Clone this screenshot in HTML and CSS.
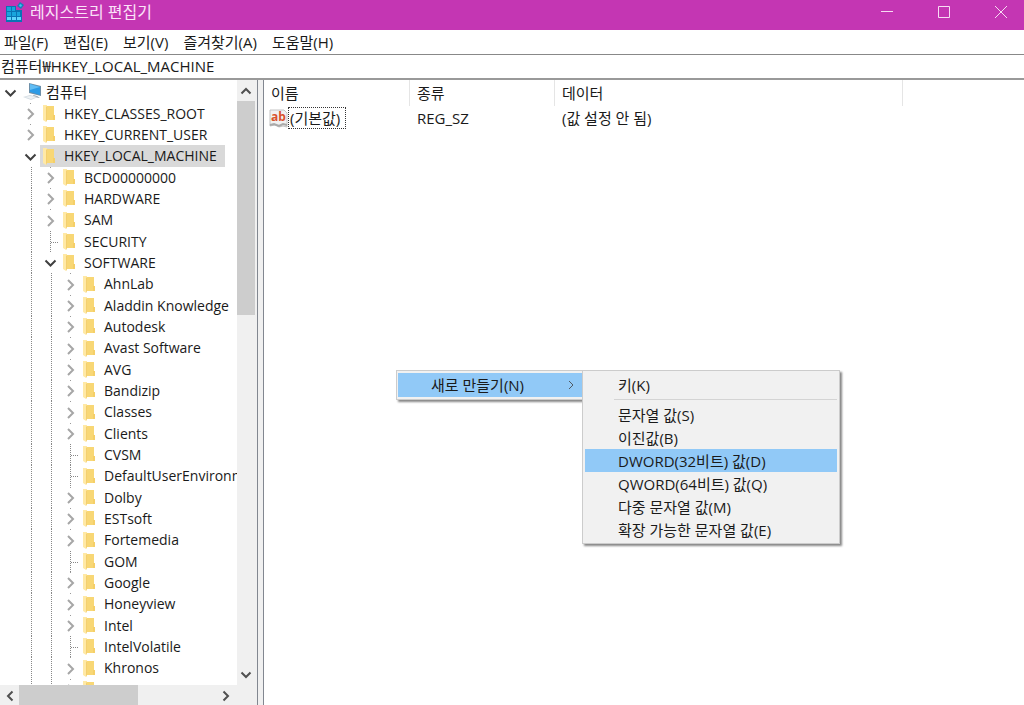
FILE: index.html
```html
<!DOCTYPE html>
<html lang="ko">
<head>
<meta charset="utf-8">
<title>레지스트리 편집기</title>
<link rel="stylesheet" href="styles.css">
</head>
<body>
<svg class="symbols" aria-hidden="true">
  <symbol id="closed" viewBox="0 0 20 21"><path d="M8 6 L13 11 L8 16" fill="none" stroke="#a6a6a6" stroke-width="2"/></symbol>
  <symbol id="open" viewBox="0 0 20 21"><path d="M5.5 8.5 L10.5 13.5 L15.5 8.5" fill="none" stroke="#404040" stroke-width="2"/></symbol>
  <symbol id="folder" viewBox="0 0 12 17"><path d="M3 1h8v11h1v3H3z" fill="#f8d775"/><path d="M10 10h2v5h-2z" fill="#f5cf68"/><path d="M0 0h4v15l-1 2-3-2z" fill="#ffe9a6"/><path d="M3 2l1-1v14l-1 2z" fill="#f3cf70"/></symbol>
</svg>
<div class="window">
  <header class="titlebar">
    <svg class="app-icon" viewBox="0 0 20 20" aria-hidden="true">
      <path d="M2 4h10v4h6v12H2z" fill="#0a74b4"/>
      <path d="M3 5h4v4H3zM8 5h3v4H8zM3 10h4v4H3zM8 10h4v4H8zM13 10h3v4h-3z" fill="#19a5dc"/>
      <path d="M3 15h4v3H3zM8 15h4v3H8zM13 15h4v3h-4z" fill="#5fd4fb"/>
      <path d="M16 0l4 3-3 4-4-3z" fill="#1480bb"/><path d="M16 2l2 1-1 2-2-1z" fill="#41c3f2"/>
    </svg>
    <h1>레지스트리 편집기</h1>
    <div class="window-buttons">
      <button aria-label="최소화"><svg viewBox="0 0 12 12"><path d="M0 5.5h12"/></svg></button>
      <button aria-label="최대화"><svg viewBox="0 0 12 12"><path d="M.5.5h11v11H.5z"/></svg></button>
      <button aria-label="닫기"><svg viewBox="0 0 12 12"><path d="M0 0l12 12M12 0L0 12"/></svg></button>
    </div>
  </header>
  <nav class="menubar">
    <button>파일(F)</button><button>편집(E)</button><button>보기(V)</button><button>즐겨찾기(A)</button><button>도움말(H)</button>
  </nav>
  <input class="address" aria-label="주소" value="컴퓨터₩HKEY_LOCAL_MACHINE">
  <main class="panes">
    <section class="tree-pane">
      <ul class="tree">
        <li><button class="twist"><svg><use href="#open"/></svg></button><svg class="computer" viewBox="0 0 20 18"><path d="M6 0l12 3v10L6 10z" fill="#6d8fa8"/><path d="M7 1l10 3v8L7 9z" fill="#2c9be6"/><path d="M7 1l10 3-10 3z" fill="#62bdf3"/><path d="M10 12l4 1 3 2-6-1z" fill="#8d98a0"/><path d="M0 14l7-2 8 2-7 3z" fill="#d4dce2"/><path d="M2 14l5-1 6 1-5 2z" fill="#eef2f5"/></svg><span>컴퓨터</span></li>
        <li><i></i><button class="twist dots"><svg><use href="#closed"/></svg></button><svg class="folder"><use href="#folder"/></svg><span>HKEY_CLASSES_ROOT</span></li>
        <li><i></i><button class="twist dots"><svg><use href="#closed"/></svg></button><svg class="folder"><use href="#folder"/></svg><span>HKEY_CURRENT_USER</span></li>
        <li><i></i><button class="twist"><svg><use href="#open"/></svg></button><div class="selected"><svg class="folder"><use href="#folder"/></svg><span>HKEY_LOCAL_MACHINE</span></div></li>
        <li><i></i><i class="line"></i><button class="twist dots"><svg><use href="#closed"/></svg></button><svg class="folder"><use href="#folder"/></svg><span>BCD00000000</span></li>
        <li><i></i><i class="line"></i><button class="twist dots"><svg><use href="#closed"/></svg></button><svg class="folder"><use href="#folder"/></svg><span>HARDWARE</span></li>
        <li><i></i><i class="line"></i><button class="twist dots"><svg><use href="#closed"/></svg></button><svg class="folder"><use href="#folder"/></svg><span>SAM</span></li>
        <li><i></i><i class="line"></i><i class="line leaf"></i><svg class="folder"><use href="#folder"/></svg><span>SECURITY</span></li>
        <li><i></i><i class="line"></i><button class="twist"><svg><use href="#open"/></svg></button><svg class="folder"><use href="#folder"/></svg><span>SOFTWARE</span></li>
        <li><i></i><i class="line"></i><i class="line"></i><button class="twist dots"><svg><use href="#closed"/></svg></button><svg class="folder"><use href="#folder"/></svg><span>AhnLab</span></li>
        <li><i></i><i class="line"></i><i class="line"></i><button class="twist dots"><svg><use href="#closed"/></svg></button><svg class="folder"><use href="#folder"/></svg><span>Aladdin Knowledge</span></li>
        <li><i></i><i class="line"></i><i class="line"></i><button class="twist dots"><svg><use href="#closed"/></svg></button><svg class="folder"><use href="#folder"/></svg><span>Autodesk</span></li>
        <li><i></i><i class="line"></i><i class="line"></i><button class="twist dots"><svg><use href="#closed"/></svg></button><svg class="folder"><use href="#folder"/></svg><span>Avast Software</span></li>
        <li><i></i><i class="line"></i><i class="line"></i><button class="twist dots"><svg><use href="#closed"/></svg></button><svg class="folder"><use href="#folder"/></svg><span>AVG</span></li>
        <li><i></i><i class="line"></i><i class="line"></i><button class="twist dots"><svg><use href="#closed"/></svg></button><svg class="folder"><use href="#folder"/></svg><span>Bandizip</span></li>
        <li><i></i><i class="line"></i><i class="line"></i><button class="twist dots"><svg><use href="#closed"/></svg></button><svg class="folder"><use href="#folder"/></svg><span>Classes</span></li>
        <li><i></i><i class="line"></i><i class="line"></i><button class="twist dots"><svg><use href="#closed"/></svg></button><svg class="folder"><use href="#folder"/></svg><span>Clients</span></li>
        <li><i></i><i class="line"></i><i class="line"></i><i class="line leaf"></i><svg class="folder"><use href="#folder"/></svg><span>CVSM</span></li>
        <li><i></i><i class="line"></i><i class="line"></i><i class="line leaf"></i><svg class="folder"><use href="#folder"/></svg><span>DefaultUserEnvironment</span></li>
        <li><i></i><i class="line"></i><i class="line"></i><button class="twist dots"><svg><use href="#closed"/></svg></button><svg class="folder"><use href="#folder"/></svg><span>Dolby</span></li>
        <li><i></i><i class="line"></i><i class="line"></i><button class="twist dots"><svg><use href="#closed"/></svg></button><svg class="folder"><use href="#folder"/></svg><span>ESTsoft</span></li>
        <li><i></i><i class="line"></i><i class="line"></i><button class="twist dots"><svg><use href="#closed"/></svg></button><svg class="folder"><use href="#folder"/></svg><span>Fortemedia</span></li>
        <li><i></i><i class="line"></i><i class="line"></i><i class="line leaf"></i><svg class="folder"><use href="#folder"/></svg><span>GOM</span></li>
        <li><i></i><i class="line"></i><i class="line"></i><button class="twist dots"><svg><use href="#closed"/></svg></button><svg class="folder"><use href="#folder"/></svg><span>Google</span></li>
        <li><i></i><i class="line"></i><i class="line"></i><button class="twist dots"><svg><use href="#closed"/></svg></button><svg class="folder"><use href="#folder"/></svg><span>Honeyview</span></li>
        <li><i></i><i class="line"></i><i class="line"></i><button class="twist dots"><svg><use href="#closed"/></svg></button><svg class="folder"><use href="#folder"/></svg><span>Intel</span></li>
        <li><i></i><i class="line"></i><i class="line"></i><i class="line leaf"></i><svg class="folder"><use href="#folder"/></svg><span>IntelVolatile</span></li>
        <li><i></i><i class="line"></i><i class="line"></i><button class="twist dots"><svg><use href="#closed"/></svg></button><svg class="folder"><use href="#folder"/></svg><span>Khronos</span></li>
        <li><i></i><i class="line"></i><i class="line"></i><button class="twist dots"><svg><use href="#closed"/></svg></button><svg class="folder"><use href="#folder"/></svg><span>Lenovo</span></li>
      </ul>
      <div class="vscroll">
        <button aria-label="위로"><svg viewBox="0 0 10 6"><path d="M.5 5.5L5 1l4.500 4.500"/></svg></button>
        <div class="vtrack"><div class="vthumb"></div></div>
        <button aria-label="아래로"><svg viewBox="0 0 10 6"><path d="M.5.5L5 5 9.500.5"/></svg></button>
      </div>
      <div class="hscroll">
        <button aria-label="왼쪽"><svg viewBox="0 0 6 10"><path d="M5.500.5L1 5l4.500 4.500"/></svg></button>
        <div class="htrack"><div class="hthumb"></div></div>
        <button aria-label="오른쪽"><svg viewBox="0 0 6 10"><path d="M.5.5L5 5 .5 9.500"/></svg></button>
      </div>
    </section>
    <div class="splitter"></div>
    <section class="values">
      <table>
        <thead><tr><th class="name">이름</th><th class="type">종류</th><th class="data">데이터</th><th class="rest"></th></tr></thead>
        <tbody><tr>
          <td><div class="value-name"><svg class="ab" viewBox="0 0 19 19" aria-hidden="true"><path d="M1 1h14l3 3v14l-4-1-4 1-4-2-5 1z" fill="#f1f1f1" stroke="#c4c4c4"/><path d="M1 16l4-1 5 2 4-2 4 1" fill="none" stroke="#aaa" stroke-width="2"/><text x="2" y="12">ab</text></svg><span>(기본값)</span></div></td>
          <td>REG_SZ</td><td>(값 설정 안 됨)</td><td></td>
        </tr></tbody>
      </table>
    </section>
  </main>
  <div class="popup context"><button class="item hot">새로 만들기(N)<svg viewBox="0 0 6 10"><path d="M1 1l4 4-4 4"/></svg></button></div>
  <div class="popup submenu">
    <button class="item">키(K)</button>
    <hr>
    <button class="item">문자열 값(S)</button>
    <button class="item">이진값(B)</button>
    <button class="item hot">DWORD(32비트) 값(D)</button>
    <button class="item">QWORD(64비트) 값(Q)</button>
    <button class="item">다중 문자열 값(M)</button>
    <button class="item">확장 가능한 문자열 값(E)</button>
  </div>
</div>
</body>
</html>
```
FILE: styles.css
```css
* { box-sizing: border-box; }
html, body { height: 100%; }
body { margin: 0; color: #1a1a1a; font: 15px/20px "Open Sans", "Noto Sans CJK KR", sans-serif; }
button { display: block; margin: 0; padding: 0; border: 0; background: none; color: inherit; font: inherit; white-space: nowrap; }
button, li, td { cursor: default; }
.symbols { position: absolute; width: 0; height: 0; }
.window { position: relative; display: flex; flex-direction: column; height: 100%; overflow: hidden; background: #fff; }

.titlebar { display: flex; flex: none; height: 30px; padding: 0 0 6px 4px; align-items: center; gap: 6px; background: #c436b3; color: #fbe3f8; }
.app-icon { width: 20px; height: 20px; }
.titlebar h1 { margin: 0; font-size: 16px; font-weight: 400; }
.window-buttons { display: flex; margin-left: auto; }
.window-buttons button { display: grid; width: 57px; height: 24px; padding-left: 10px; place-items: center; }
.window-buttons svg { width: 12px; height: 12px; fill: none; stroke: #f7dcf3; stroke-width: 1; }

.menubar { display: flex; flex: none; height: 24px; padding: 0 4px; align-items: center; gap: 15px; }
.address { flex: none; width: 100%; height: 26px; padding: 0 1px 2px; border: 0; border-top: 1px solid #888; border-bottom: 2px solid #999; outline: 0; background: #fff; color: #1a1a1a; font: 15px/20px "Open Sans", "Noto Sans CJK KR", sans-serif; }

.panes { display: flex; flex: 1; min-height: 0; }
.tree-pane { display: grid; flex: none; width: 257px; grid-template: minmax(0, 1fr) 20px / minmax(0, 1fr) 20px; }
.tree { margin: 0; padding: 1px 0 0; overflow: hidden; list-style: none; font-size: 14px; }
.tree li { display: flex; height: 21px; align-items: center; white-space: nowrap; }
.tree li:nth-child(3n + 1) { height: 22px; }
.tree li > * { flex: none; }
.tree i, .twist { width: 20px; height: 100%; }
.twist svg { display: block; width: 20px; height: 21px; }
.line { background: repeating-linear-gradient(#888 0 1px, #fff 1px 2px) 11px 0 / 1px 100% no-repeat; }
.leaf { background: repeating-linear-gradient(#888 0 1px, #fff 1px 2px) 10px 0 / 1px 100% no-repeat, repeating-linear-gradient(90deg, #888 0 1px, #fff 1px 2px) 11px 11px / 8px 1px no-repeat; }
.dots { background: linear-gradient(#999, #999) 10px 0 / 1px 1px no-repeat; }
.folder { width: 12px; height: 17px; margin: 0 9px 0 3px; }
.computer { width: 20px; height: 18px; margin: 0 3px; }
.selected { display: flex; height: 100%; padding-right: 8px; align-items: center; background: #d9d9d9; }
.tree li:first-child span { font-size: 15px; }

.vscroll { display: flex; flex-direction: column; background: #f0f0f0; }
.vscroll button, .hscroll button { display: grid; flex: none; width: 18px; height: 21px; place-items: center; }
.vscroll svg { width: 10px; height: 6px; }
.hscroll svg { width: 6px; height: 10px; }
.vscroll svg, .hscroll svg { fill: none; stroke: #505050; stroke-width: 2; overflow: visible; }
.vtrack { flex: 1; }
.vthumb { width: 18px; height: 38%; background: #cdcdcd; }
.hscroll { display: flex; grid-column: 1 / -1; padding: 0 22px 0 1px; background: #f0f0f0; }
.htrack { flex: 1; }
.hthumb { width: 60%; height: 20px; background: #cdcdcd; }
.splitter { flex: none; width: 7px; border: 1px solid #828790; background: #f0f0f0; border-top: 0; border-bottom: 0; }

.values { flex: 1; min-width: 0; }
table { width: 100%; border-spacing: 0; table-layout: fixed; }
th, td { padding: 0 0 0 7px; font-weight: 400; text-align: left; white-space: nowrap; }
th { height: 26px; border-right: 1px solid #e5e5e5; }
th.rest { border-right: 0; }
td { height: 24px; }
.name { width: 146px; }
.type { width: 145px; }
.data { width: 348px; }
.value-name { display: flex; height: 24px; margin-left: -2px; align-items: center; }
.value-name span { padding: 0 5px 0 1px; border: 1px dotted #333; }
.ab { width: 19px; height: 19px; }
.ab text { fill: #d9512c; font: bold 12px "Open Sans", sans-serif; }

.popup { position: absolute; border: 1px solid #ccc; background: #f1f1f1; box-shadow: 2px 2px 2px #888; }
.context { left: 396px; top: 370px; width: 187px; padding: 2px 0 2px 1px; }
.submenu { left: 582px; top: 370px; width: 258px; padding: 2px; }
.item { display: flex; width: 100%; height: 23px; padding-left: 33px; align-items: center; text-align: left; }
.context .item { height: 24px; }
.item.hot { background: #91c9f7; }
.item svg { width: 6px; height: 10px; margin: 0 8px 0 auto; fill: none; stroke: #505a64; stroke-width: 1; }
.submenu hr { height: 1px; margin: 3px 0 3px 29px; border: 0; background: #d4d4d4; }
```
